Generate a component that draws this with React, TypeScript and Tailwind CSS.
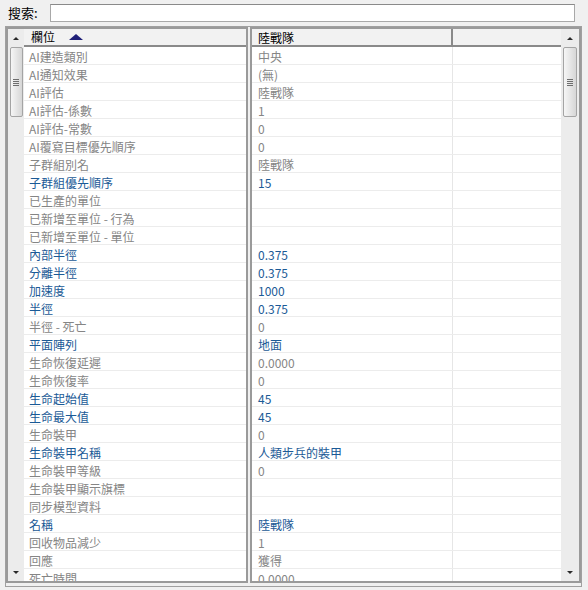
type Row = { name: string; value: string; blue?: boolean };

const rows: Row[] = [
  { name: 'AI建造類別', value: '中央' },
  { name: 'AI通知效果', value: '(無)' },
  { name: 'AI評估', value: '陸戰隊' },
  { name: 'AI評估-係數', value: '1' },
  { name: 'AI評估-常數', value: '0' },
  { name: 'AI覆寫目標優先順序', value: '0' },
  { name: '子群組別名', value: '陸戰隊' },
  { name: '子群組優先順序', value: '15', blue: true },
  { name: '已生產的單位', value: '' },
  { name: '已新增至單位 - 行為', value: '' },
  { name: '已新增至單位 - 單位', value: '' },
  { name: '內部半徑', value: '0.375', blue: true },
  { name: '分離半徑', value: '0.375', blue: true },
  { name: '加速度', value: '1000', blue: true },
  { name: '半徑', value: '0.375', blue: true },
  { name: '半徑 - 死亡', value: '0' },
  { name: '平面陣列', value: '地面', blue: true },
  { name: '生命恢復延遲', value: '0.0000' },
  { name: '生命恢復率', value: '0' },
  { name: '生命起始值', value: '45', blue: true },
  { name: '生命最大值', value: '45', blue: true },
  { name: '生命裝甲', value: '0' },
  { name: '生命裝甲名稱', value: '人類步兵的裝甲', blue: true },
  { name: '生命裝甲等級', value: '0' },
  { name: '生命裝甲顯示旗標', value: '' },
  { name: '同步模型資料', value: '' },
  { name: '名稱', value: '陸戰隊', blue: true },
  { name: '回收物品減少', value: '1' },
  { name: '回應', value: '獲得' },
  { name: '死亡時間', value: '0.0000' },
];

const ScrollBar = ({ className, thumb }: { className: string; thumb: string }) => (
  <div className={`flex shrink-0 flex-col items-center bg-[#ececec] ${className}`}>
    <div className="flex h-[18px] w-full items-center justify-center">
      <div className="h-0 w-0 border-x-[3px] border-b-[3px] border-x-transparent border-b-[#2a2a2a]" />
    </div>
    <div
      className={`flex h-[70px] flex-col items-center justify-center gap-[1px] rounded-[2px] border border-[#a4a4a4] bg-gradient-to-r from-[#f6f6f6] via-[#e6e6e6] to-[#d6d6d6] ${thumb}`}
    >
      <div className="h-px w-[6px] bg-[#6e6e6e]" />
      <div className="h-px w-[6px] bg-[#6e6e6e]" />
      <div className="h-px w-[6px] bg-[#6e6e6e]" />
      <div className="h-px w-[6px] bg-[#6e6e6e]" />
    </div>
    <div className="flex-1" />
    <div className="flex h-[18px] w-full items-center justify-center">
      <div className="h-0 w-0 border-x-[3px] border-t-[3px] border-x-transparent border-t-[#2a2a2a]" />
    </div>
  </div>
);

const textColor = (r: Row) => (r.blue ? 'text-[#1b5a96]' : 'text-[#858585]');

export default function App() {
  return (
    <div
      className="h-[590px] w-[588px] overflow-hidden bg-[#f0f0f0] text-[12px] leading-[18px]"
      style={{ fontFamily: '"Noto Sans CJK TC", "Noto Sans", sans-serif' }}
    >
      {/* search bar */}
      <div className="flex h-[26px] items-center pl-[8px] pr-[13px]">
        <span className="w-[42px] text-[13px] text-black">搜索:</span>
        <div className="h-[18px] flex-1 border border-[#a8a8a8] border-t-[#8a8a8a] bg-white" />
      </div>

      {/* frame */}
      <div className="ml-[5px] flex h-[561px] w-[577px] border border-[#a0a0a0] bg-[#f0f0f0] pb-[3px]">
        {/* left pane */}
        <div className="flex w-[242px] overflow-hidden border-2 border-[#9a9a9a] bg-white">
          <ScrollBar className="w-[16px]" thumb="w-[13px]" />
          <div className="flex min-w-0 flex-1 flex-col">
            <div className="flex h-[18px] shrink-0 items-center gap-[14px] border-b-2 border-[#8a8a8a] bg-[#f2f2f2] pl-[7px] text-black">
              <span>欄位</span>
              <div className="h-0 w-0 border-x-[7px] border-b-[6px] border-x-transparent border-b-[#1f1f78]" />
            </div>
            {rows.map((r, i) => (
              <div
                key={i}
                className={`h-[18px] shrink-0 truncate border-b border-[#ececec] pl-[5px] pt-[1px] leading-[17px] ${textColor(r)}`}
              >
                {r.name}
              </div>
            ))}
          </div>
        </div>

        <div className="w-[2px] shrink-0" />

        {/* right pane */}
        <div className="flex flex-1 overflow-hidden border-2 border-[#9a9a9a] bg-white">
          <div className="flex min-w-0 flex-1 flex-col">
            <div className="flex h-[18px] shrink-0 border-b-2 border-[#8a8a8a] bg-[#f2f2f2] text-black">
              <div className="w-[201px] border-r-2 border-[#8a8a8a] pl-[6px]">陸戰隊</div>
              <div className="flex-1" />
            </div>
            {rows.map((r, i) => (
              <div key={i} className="flex h-[18px] shrink-0 border-b border-[#ececec]">
                <div
                  className={`w-[201px] truncate border-r border-[#e6e6e6] pl-[6px] pt-[1px] leading-[17px] ${textColor(r)}`}
                >
                  {r.value}
                </div>
                <div className="flex-1" />
              </div>
            ))}
          </div>
          <ScrollBar className="w-[18px]" thumb="w-[14px]" />
        </div>
      </div>
    </div>
  );
}
